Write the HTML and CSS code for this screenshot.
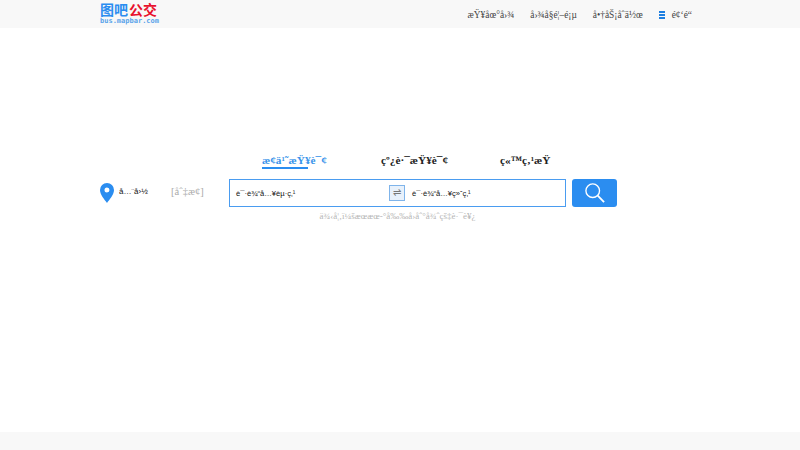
FILE: index.html
```html
<!DOCTYPE html>
<html>
<head>
<meta charset="utf-8">
<title>bus</title>
<link rel="stylesheet" href="styles.css">
</head>
<body>
<header class="top">
  <div class="wrap top-in">
    <div class="logo">
      <div class="logo-cn"><span class="blue">图吧</span><span class="red">公交</span></div>
      <div class="logo-en">bus.mapbar.com</div>
    </div>
    <nav class="nav">
      <a>æŸ¥åœ°å›¾</a>
      <a>å›¾å§é¦–é¡µ</a>
      <a>å•†åŠ¡åˆä½œ</a>
      <a class="menu"><span class="bars"><i></i><i></i><i></i></span>é¢‘é“</a>
    </nav>
  </div>
</header>
<main class="main">
  <div class="tabs">
    <a class="tab on">æ¢ä¹˜æŸ¥è¯¢</a>
    <a class="tab">çº¿è·¯æŸ¥è¯¢</a>
    <a class="tab">ç«™ç‚¹æŸ</a>
  </div>
  <div class="wrap search">
    <svg class="pin" width="14" height="20" viewBox="0 0 14 20"><path fill="#2b8df0" fill-rule="evenodd" d="M7 0a7 7 0 0 1 7 7c0 4.500-4.500 9.500-7 13C4.500 16.500 0 11.500 0 7a7 7 0 0 1 7-7zm0 4.500a2.500 2.500 0 1 0 0 5 2.500 2.500 0 0 0 0-5z"/></svg>
    <span class="city">å…¨å›½</span>
    <span class="switch">[åˆ‡æ¢]</span>
    <div class="box">
      <span class="field">è¯·è¾“å…¥èµ·ç‚¹</span>
      <span class="swap">⇌</span>
      <span class="field end">è¯·è¾“å…¥ç»ˆç‚¹</span>
    </div>
    <button class="go"><svg width="20" height="20" viewBox="0 0 22 22" fill="none" stroke="#fff"><circle cx="8.500" cy="8.500" r="7.500" stroke-width="1.500"/><path d="M14 14l7 7" stroke-width="2"/></svg></button>
  </div>
  <p class="hint">ä¾‹å¦‚ï¼šæœæœ-°å‰‰å›åˆ°å¾ˆçš‡è·¯è¥¿</p>
</main>
<footer class="foot"></footer>
</body>
</html>
```
FILE: styles.css
```css
* { box-sizing: border-box; }
html, body { margin: 0; height: 100%; }
body { display: flex; flex-direction: column; min-height: 450px; background: #fff; font-family: "Liberation Serif", serif; color: #222; }
.wrap { width: 600px; margin: 0 auto; }
.top { height: 28px; background: #f8f8f8; flex: none; }
.top-in { display: flex; justify-content: space-between; align-items: flex-start; }
.logo { width: 60px; padding-top: 2px; }
.logo-cn { display: flex; gap: 1px; font: 700 14px/14px "Noto Sans CJK SC", sans-serif; white-space: nowrap; }
.blue { color: #2b8df0; }
.red { color: #e8112d; }
.logo-en { font: 700 7px/8px "DejaVu Sans Mono", monospace; color: #5aa4ea; white-space: nowrap; margin-top: 1px; }
.nav { display: flex; gap: 16px; font-size: 9.400px; line-height: 30px; color: #444; padding-right: 8px; }
.menu { display: flex; align-items: center; gap: 7px; }
.bars { display: flex; flex-direction: column; gap: 1px; width: 6px; }
.bars i { height: 2px; background: #1f7fe0; }
.main { flex: 1; }
.tabs { display: flex; gap: 73px; padding: 126px 0 0 262px; font-size: 11.300px; font-weight: 700; }
.tab { width: 46px; height: 15px; line-height: 13px; white-space: nowrap; }
.tab.on { color: #3a94ea; border-bottom: 2px solid #2b8df0; }
.search { display: flex; align-items: center; margin-top: 10px; height: 28px; }
.pin { flex: none; margin-top: -1px; }
.city { font: 8px "Liberation Sans", sans-serif; color: #111; margin: -4px 0 0 5px; width: 52px; }
.switch { font-size: 10.500px; color: #aaa; width: 58px; margin-top: -3px; }
.box { display: flex; align-items: center; width: 337px; height: 28px; border: 1px solid #4a9cf0; padding-left: 6px; font: 7.600px "Liberation Sans", sans-serif; color: #111; }
.field { width: 153px; }
.field.end { width: auto; margin-left: 7px; }
.swap { width: 16px; height: 16px; background: #e8f1fb; border: 1px solid #7fb4ea; color: #777; font-size: 10px; line-height: 13px; text-align: center; }
.go { width: 45px; height: 28px; margin-left: 6px; padding: 0; border: 0; border-radius: 3px; background: #2b8df0; display: flex; align-items: center; justify-content: center; }
.hint { margin: 3px 0 0; padding-right: 5px; text-align: center; font-size: 9px; line-height: 12px; color: #b5b5b5; }
.foot { height: 18px; background: #f8f8f8; flex: none; }
```
